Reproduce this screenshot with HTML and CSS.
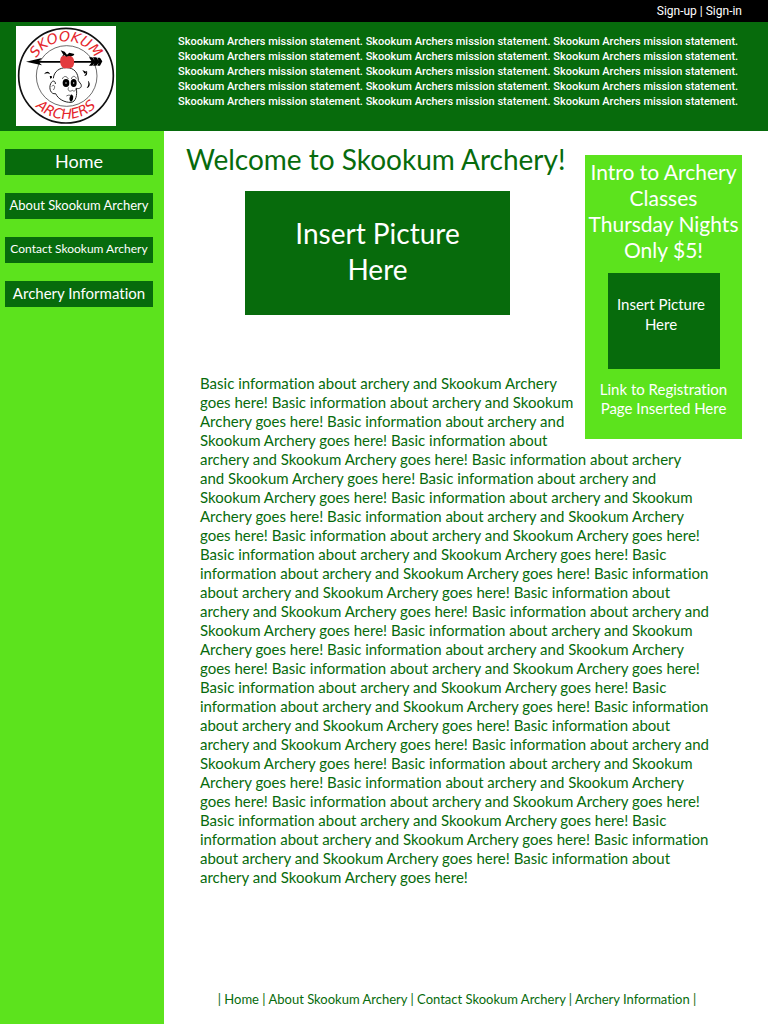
FILE: index.html
```html
<!DOCTYPE html>
<html lang="en">
<head>
<meta charset="utf-8">
<meta name="viewport" content="width=device-width, initial-scale=1">
<title>Skookum Archers</title>
<link rel="stylesheet" href="styles.css">
</head>
<body>
<div class="account-bar"><a href="#signup">Sign-up</a> | <a href="#signin">Sign-in</a></div>
<header class="banner">
  <svg class="logo" viewBox="0 0 300 300" role="img" aria-label="Skookum Archers logo">
    <defs>
      <path id="arc-top" d="M47 149A103 103 0 0 1 253 149"/>
      <path id="arc-bottom" d="M20 149A130 130 0 0 0 280 149"/>
    </defs>
    <rect width="300" height="300" fill="#fff"/>
    <circle cx="150" cy="149" r="142" fill="none" stroke="#111" stroke-width="5"/>
    <circle cx="152" cy="150" r="91" fill="none" stroke="#222" stroke-width="2"/>
    <text class="logo-text"><textPath href="#arc-top" startOffset="50%" text-anchor="middle">SKOOKUM</textPath></text>
    <text class="logo-text"><textPath href="#arc-bottom" startOffset="50%" text-anchor="middle">ARCHERS</textPath></text>
    <path d="M112 157C114 137 129 125 151 125C175 125 187 141 187 164L195 175C199 184 190 190 181 187C184 207 180 228 165 229C146 230 126 219 119 203C104 206 98 187 104 173C109 161 119 164 118 174" fill="#fff" stroke="#222" stroke-width="3"/>
    <path d="M107 181C116 173 119 184 112 192M139 159C143 148 153 150 157 159M166 159C168 149 178 148 181 158M158 184C153 193 161 199 169 193C174 198 181 193 180 187M151 210C158 205 167 208 172 212" fill="none" stroke="#222" stroke-width="2"/>
    <ellipse cx="150" cy="171" rx="10" ry="12"/><ellipse cx="173" cy="171" rx="9" ry="12"/>
    <circle cx="150" cy="171" r="2" fill="#fff"/><circle cx="173" cy="171" r="2" fill="#fff"/>
    <path d="M167 205C175 211 171 226 165 227C158 224 159 212 167 205"/>
    <path d="M84 145C91 134 100 136 102 145C95 139 90 142 84 145M101 151C109 147 111 157 103 158ZM204 149C215 151 214 140 213 134C208 137 212 145 204 149M199 132L212 138L206 143ZM216 164C224 170 223 184 212 186C218 179 218 172 216 164"/>
    <path d="M30 107L78 96L70 105H226L219 94H229L236 104L231 94H241L248 104L244 95H252L259 106L252 119H244L248 110L241 119H231L236 110L229 119H219L226 110H70L78 118Z"/>
    <path d="M135 94C141 86 151 91 154 91C164 86 172 94 174 102C176 120 169 127 160 127H145C134 125 129 106 135 94Z" fill="#e33a3d"/>
    <path d="M134 73L146 77L153 86L160 80L175 84C174 91 165 91 158 90L151 92L146 88L138 91L142 86Z"/>
  </svg>
  <p class="mission">Skookum Archers mission statement. Skookum Archers mission statement. Skookum Archers mission statement.<br>
  Skookum Archers mission statement. Skookum Archers mission statement. Skookum Archers mission statement.<br>
  Skookum Archers mission statement. Skookum Archers mission statement. Skookum Archers mission statement.<br>
  Skookum Archers mission statement. Skookum Archers mission statement. Skookum Archers mission statement.<br>
  Skookum Archers mission statement. Skookum Archers mission statement. Skookum Archers mission statement.</p>
</header>
<div class="columns">
  <nav class="sidebar" aria-label="Main">
    <a class="nav-link nav-large" href="#home">Home</a>
    <a class="nav-link nav-medium" href="#about">About Skookum Archery</a>
    <a class="nav-link nav-small" href="#contact">Contact Skookum Archery</a>
    <a class="nav-link nav-regular" href="#information">Archery Information</a>
  </nav>
  <div class="page">
    <main class="content">
      <aside class="promo">
        <h2 class="promo-title">Intro to Archery<br>Classes<br>Thursday Nights<br>Only $5!</h2>
        <div class="promo-picture">Insert Picture<br>Here</div>
        <a class="promo-link" href="#register">Link to Registration<br>Page Inserted Here</a>
      </aside>
      <h1 class="title">Welcome to Skookum Archery!</h1>
      <div class="hero-picture">Insert Picture<br>Here</div>
      <p class="intro">Basic information about archery and Skookum Archery<br>
      goes here! Basic information about archery and Skookum<br>
      Archery goes here! Basic information about archery and<br>
      Skookum Archery goes here! Basic information about<br>
      archery and Skookum Archery goes here! Basic information about archery<br>
      and Skookum Archery goes here! Basic information about archery and<br>
      Skookum Archery goes here! Basic information about archery and Skookum<br>
      Archery goes here! Basic information about archery and Skookum Archery<br>
      goes here! Basic information about archery and Skookum Archery goes here!<br>
      Basic information about archery and Skookum Archery goes here! Basic<br>
      information about archery and Skookum Archery goes here! Basic information<br>
      about archery and Skookum Archery goes here! Basic information about<br>
      archery and Skookum Archery goes here! Basic information about archery and<br>
      Skookum Archery goes here! Basic information about archery and Skookum<br>
      Archery goes here! Basic information about archery and Skookum Archery<br>
      goes here! Basic information about archery and Skookum Archery goes here!<br>
      Basic information about archery and Skookum Archery goes here! Basic<br>
      information about archery and Skookum Archery goes here! Basic information<br>
      about archery and Skookum Archery goes here! Basic information about<br>
      archery and Skookum Archery goes here! Basic information about archery and<br>
      Skookum Archery goes here! Basic information about archery and Skookum<br>
      Archery goes here! Basic information about archery and Skookum Archery<br>
      goes here! Basic information about archery and Skookum Archery goes here!<br>
      Basic information about archery and Skookum Archery goes here! Basic<br>
      information about archery and Skookum Archery goes here! Basic information<br>
      about archery and Skookum Archery goes here! Basic information about<br>
      archery and Skookum Archery goes here!</p>
    </main>
    <footer class="footer">| <a href="#home">Home</a> | <a href="#about">About Skookum Archery</a> | <a href="#contact">Contact Skookum Archery</a> | <a href="#information">Archery Information</a> |</footer>
  </div>
</div>
</body>
</html>
```
FILE: styles.css
```css
:root {
  --forest: #076b0c;
  --lime: #5ce31d;
}
* { box-sizing: border-box; }
body {
  margin: 0;
  min-height: 100vh;
  display: flex;
  flex-direction: column;
  background: #fff;
  color: var(--forest);
  font-family: Lato, "Open Sans", sans-serif;
  font-size: 15px;
  font-variant-ligatures: none;
  line-height: 19px;
}
a { color: inherit; text-decoration: none; }
a:hover { text-decoration: underline; }
h1, h2, p { margin: 0; font-weight: 400; }

.account-bar {
  height: 22px;
  padding-right: 26px;
  background: #000;
  color: #fff;
  font-family: Roboto, sans-serif;
  font-size: 12px;
  line-height: 22px;
  text-align: right;
}
.banner {
  display: flex;
  align-items: flex-start;
  gap: 62px;
  padding: 4px 16px 5px;
  background: var(--forest);
  color: #fff;
}
.logo { flex: none; width: 100px; height: 100px; }
.logo-text {
  fill: #e5252b;
  font-family: "DejaVu Sans", sans-serif;
  font-size: 42px;
  font-style: italic;
}
.mission {
  padding-top: 8px;
  font-family: Roboto, sans-serif;
  font-size: 11px;
  font-weight: 500;
  line-height: 15px;
  white-space: nowrap;
}

.columns { flex: 1; display: flex; }
.sidebar {
  flex: none;
  width: 164px;
  display: flex;
  flex-direction: column;
  gap: 18px;
  padding: 18px 11px 18px 5px;
  background: var(--lime);
}
.nav-link {
  height: 26px;
  background: var(--forest);
  color: #fff;
  line-height: 24px;
  text-align: center;
  white-space: nowrap;
}
.nav-large { font-size: 18px; }
.nav-medium { font-size: 13px; }
.nav-small { font-size: 12px; }
.nav-regular { font-size: 15px; }

.page {
  flex: 1;
  min-width: 0;
  display: flex;
  flex-direction: column;
  justify-content: space-between;
}
.content { padding: 10px 26px 0 22px; }
.title {
  font-size: 28px;
  line-height: 36px;
  white-space: nowrap;
}
.hero-picture {
  width: 265px;
  margin: 14px 0 59px 59px;
  padding: 24px 0 28px;
  background: var(--forest);
  color: #fff;
  font-size: 28px;
  line-height: 36px;
  text-align: center;
}
.promo {
  float: right;
  width: 157px;
  margin-top: 14px;
  padding: 4px 0 20px;
  background: var(--lime);
  color: #fff;
  text-align: center;
}
.promo-title {
  font-size: 21px;
  line-height: 26px;
  white-space: nowrap;
}
.promo-picture {
  width: 112px;
  margin: 10px auto 11px 23px;
  padding: 21px 6px 35px 0;
  background: var(--forest);
  line-height: 20px;
}
.promo-link {
  display: block;
  padding-bottom: 1px;
}
.intro {
  padding-left: 14px;
  white-space: nowrap;
}
.footer {
  padding: 16px 18px 15px 0;
  font-size: 13px;
  text-align: center;
}
@media (max-width: 740px) {
  .mission, .title, .intro { white-space: normal; }
}
```
